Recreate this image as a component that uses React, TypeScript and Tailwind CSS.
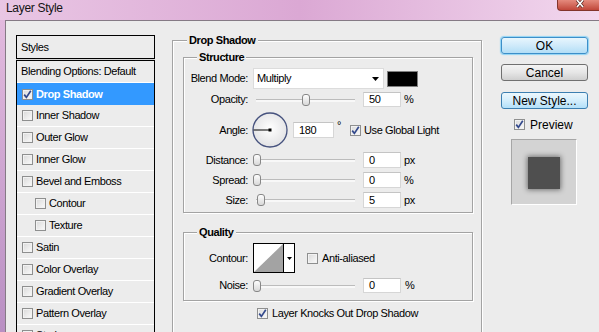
import React from 'react';

function Check({ checked = false }: { checked?: boolean }) {
  return (
    <span className="flex h-[11px] w-[11px] shrink-0 items-center justify-center border border-[#8e8f8f] bg-gradient-to-br from-[#d9d9d9] to-[#fbfbfb] shadow-[inset_0_0_0_1px_#f2f2f2]">
      {checked && (
        <svg width="9" height="9" viewBox="0 0 9 9">
          <path d="M1.2 4.6 L3.4 7.4 L7.8 0.8" fill="none" stroke="#33498c" strokeWidth="1.7" />
        </svg>
      )}
    </span>
  );
}

function Slider({ at }: { at: number }) {
  return (
    <div className="relative ml-[5px] h-[14px] w-[104px] shrink-0">
      <div className="absolute left-[3px] right-[2px] top-[6px] h-[3px] border-t border-[#bcbcbc] bg-[#f8f8f8]" />
      <div
        className="absolute top-[1px] h-[12px] w-[8px] rounded-[3px] border border-[#878787] bg-gradient-to-b from-[#fdfdfd] to-[#d8d8d8]"
        style={{ left: at }}
      />
    </div>
  );
}

function NumBox({ value, className = 'w-[38px] h-[15px]' }: { value: string; className?: string }) {
  return (
    <div className={`flex shrink-0 items-center border border-[#d6d6d6] border-t-[#c4c4c4] bg-white pl-[5px] ${className}`}>
      {value}
    </div>
  );
}

function Label({ text }: { text: string }) {
  return <div className="w-[64px] shrink-0 text-right">{text}</div>;
}

function Group({ title, titleLeft, className, children }: { title: string; titleLeft: string; className: string; children?: React.ReactNode }) {
  return (
    <div className={`relative shrink-0 border border-[#a3a3a3] shadow-[inset_1px_1px_0_#fff,1px_1px_0_#fff] ${className}`}>
      <span className={`absolute -top-[8px] ${titleLeft} bg-[#ececec] px-[2px] font-bold leading-[14px]`}>{title}</span>
      {children}
    </div>
  );
}

const styleRows = [
  { label: 'Inner Shadow' },
  { label: 'Outer Glow' },
  { label: 'Inner Glow' },
  { label: 'Bevel and Emboss' },
  { label: 'Contour', sub: true },
  { label: 'Texture', sub: true },
  { label: 'Satin' },
  { label: 'Color Overlay' },
  { label: 'Gradient Overlay' },
  { label: 'Pattern Overlay' },
  { label: 'Stroke' },
];

export default function App() {
  return (
    <div className="flex h-[332px] w-[599px] flex-col overflow-hidden font-['Liberation_Sans',Arial,sans-serif] text-[11px] tracking-[-0.4px] text-black">
      {/* Title bar */}
      <div className="relative flex h-[20px] shrink-0 bg-gradient-to-r from-[#e9c6e4] via-[#dba8d4] to-[#f2d8ee]">
        <span className="ml-[6px] text-[12px] leading-[16px] tracking-[-0.3px] text-[#141414]">Layer Style</span>
        <div className="absolute right-0 top-0 flex h-[11px] w-[42px] items-start justify-center rounded-bl-[4px] border-b border-l border-[#83352b] bg-gradient-to-b from-[#e48a7d] to-[#c0463a] pl-[2px]">
          <svg width="10" height="8" viewBox="0 0 10 8">
            <path d="M2 0 L8 7 M8 0 L2 7" stroke="#5a2a24" strokeWidth="3" />
            <path d="M2 0 L8 7 M8 0 L2 7" stroke="#fff" strokeWidth="1.6" />
          </svg>
        </div>
      </div>

      <div className="flex min-h-0 flex-1">
        <div className="w-[5px] shrink-0 bg-gradient-to-b from-[#e2bade] to-[#b98fc3]" />
        <div className="flex min-w-0 flex-1 items-start border-l border-t border-[#857a85] bg-[#ececec]">
          {/* Styles list */}
          <div className="ml-[10px] mt-[14px] w-[139px] shrink-0">
            <div className="flex h-[24px] items-center border border-black pl-[4px]">Styles</div>
            <div className="h-[1px] bg-[#d4d4d4]" />
            <div className="border-x border-t border-black">
              <div className="flex h-[22px] items-center border-b border-white pl-[4px]">Blending Options: Default</div>
              <div className="flex h-[22px] items-center gap-[3px] bg-[#3399ff] pl-[5px] font-bold text-white">
                <Check checked />
                <span>Drop Shadow</span>
              </div>
              {styleRows.map((r) => (
                <div
                  key={r.label}
                  className={`flex h-[22px] items-center gap-[3px] border-b border-white ${r.sub ? 'pl-[18px]' : 'pl-[5px]'}`}
                >
                  <Check />
                  <span>{r.label}</span>
                </div>
              ))}
            </div>
          </div>

          {/* Drop Shadow group */}
          <Group title="Drop Shadow" titleLeft="left-[14px]" className="ml-[17px] mt-[19px] h-[320px] w-[310px] pl-[10px] pt-[16px]">
            <Group title="Structure" titleLeft="left-[13px]" className="h-[156px] w-[290px] pt-[10px]">
              <div className="flex h-[21px] items-center">
                <Label text="Blend Mode:" />
                <div className="ml-[5px] flex h-[21px] w-[131px] items-center justify-between border border-[#dcdcdc] bg-white pl-[3px] pr-[4px]">
                  <span>Multiply</span>
                  <svg width="7" height="4" viewBox="0 0 7 4">
                    <path d="M0 0 H7 L3.5 4 Z" fill="#000" />
                  </svg>
                </div>
                <div className="ml-[3px] h-[16px] w-[31px] border border-[#7f7f7f] bg-black" />
              </div>

              <div className="mt-[2px] flex h-[17px] items-center">
                <Label text="Opacity:" />
                <Slider at={49} />
                <NumBox value="50" className="ml-[6px] h-[15px] w-[38px]" />
                <span className="ml-[3px]">%</span>
              </div>

              <div className="mt-[4px] flex h-[36px] items-center">
                <Label text="Angle:" />
                <svg className="ml-[4px] shrink-0" width="36" height="36" viewBox="0 0 36 36">
                  <defs>
                    <radialGradient id="dial" cx="50%" cy="45%" r="55%">
                      <stop offset="0%" stopColor="#ffffff" />
                      <stop offset="100%" stopColor="#e2e2e4" />
                    </radialGradient>
                  </defs>
                  <circle cx="18" cy="18" r="17" fill="url(#dial)" stroke="#46527e" strokeWidth="1.3" />
                  <path d="M1.5 18 H18" stroke="#000" strokeWidth="1" />
                  <rect x="16.5" y="16.5" width="3" height="3" fill="#000" />
                </svg>
                <NumBox value="180" className="ml-[5px] h-[16px] w-[41px]" />
                <span className="ml-[3px] self-start mt-[8px] leading-[10px]">°</span>
                <span className="ml-[9px]">
                  <Check checked />
                </span>
                <span className="ml-[3px]">Use Global Light</span>
              </div>

              <div className="mt-[2px] flex h-[20px] items-center">
                <Label text="Distance:" />
                <Slider at={0} />
                <NumBox value="0" className="ml-[6px] h-[16px] w-[38px]" />
                <span className="ml-[3px]">px</span>
              </div>
              <div className="flex h-[20px] items-center">
                <Label text="Spread:" />
                <Slider at={0} />
                <NumBox value="0" className="ml-[6px] h-[16px] w-[38px]" />
                <span className="ml-[3px]">%</span>
              </div>
              <div className="flex h-[20px] items-center">
                <Label text="Size:" />
                <Slider at={4} />
                <NumBox value="5" className="ml-[6px] h-[16px] w-[38px]" />
                <span className="ml-[3px]">px</span>
              </div>
            </Group>

            <Group title="Quality" titleLeft="left-[13px]" className="mt-[19px] h-[69px] w-[290px] pt-[10px]">
              <div className="flex h-[30px] items-center">
                <Label text="Contour:" />
                <div className="ml-[5px] flex h-[30px] w-[42px] shrink-0 border border-black bg-white">
                  <svg width="29" height="28" viewBox="0 0 29 28" className="shrink-0">
                    <path d="M0 28 L29 0 V28 Z" fill="#a3a3a3" />
                  </svg>
                  <div className="flex w-[11px] items-center justify-center border-l border-black">
                    <svg width="5" height="3" viewBox="0 0 5 3">
                      <path d="M0 0 H5 L2.5 3 Z" fill="#000" />
                    </svg>
                  </div>
                </div>
                <span className="ml-[12px]">
                  <Check />
                </span>
                <span className="ml-[4px]">Anti-aliased</span>
              </div>
              <div className="mt-[4px] flex h-[17px] items-center">
                <Label text="Noise:" />
                <Slider at={0} />
                <NumBox value="0" className="ml-[6px] h-[15px] w-[38px]" />
                <span className="ml-[4px]">%</span>
              </div>
            </Group>

            <div className="mt-[6px] flex h-[12px] items-center pl-[74px]">
              <Check checked />
              <span className="ml-[4px]">Layer Knocks Out Drop Shadow</span>
            </div>
          </Group>

          {/* Buttons */}
          <div className="ml-[19px] mt-[16px] flex w-[87px] shrink-0 flex-col text-[12px] tracking-normal">
            <button className="flex h-[17px] w-[87px] items-center justify-center rounded-[3px] border border-[#3c8fc9] bg-gradient-to-b from-[#e8f6fd] via-[#cfeafa] to-[#b2def6] leading-none shadow-[0_0_1px_1px_#8fd4f6]">
              OK
            </button>
            <button className="mt-[10px] flex h-[17px] w-[87px] items-center justify-center rounded-[3px] border border-[#707070] bg-gradient-to-b from-[#f4f4f4] via-[#e6e6e6] to-[#cfcfcf] leading-none">
              Cancel
            </button>
            <button className="mt-[11px] flex h-[17px] w-[87px] items-center justify-center rounded-[3px] border border-[#3c7fb1] bg-gradient-to-b from-[#ecf7fd] via-[#d4eefc] to-[#b3e0f9] leading-none">
              New Style...
            </button>
            <div className="ml-[13px] mt-[9px] flex h-[13px] items-center">
              <Check checked />
              <span className="ml-[5px]">Preview</span>
            </div>
            <div className="ml-[10px] mt-[8px] h-[66px] w-[66px] border border-[#a6a6a6] border-b-white border-r-white bg-[#d3d3d3] pl-[16px] pt-[17px]">
              <div className="h-[32px] w-[32px] bg-[#4f4f4f] shadow-[0_0_5px_1px_rgba(0,0,0,0.45)]" />
            </div>
          </div>
        </div>
      </div>
    </div>
  );
}
